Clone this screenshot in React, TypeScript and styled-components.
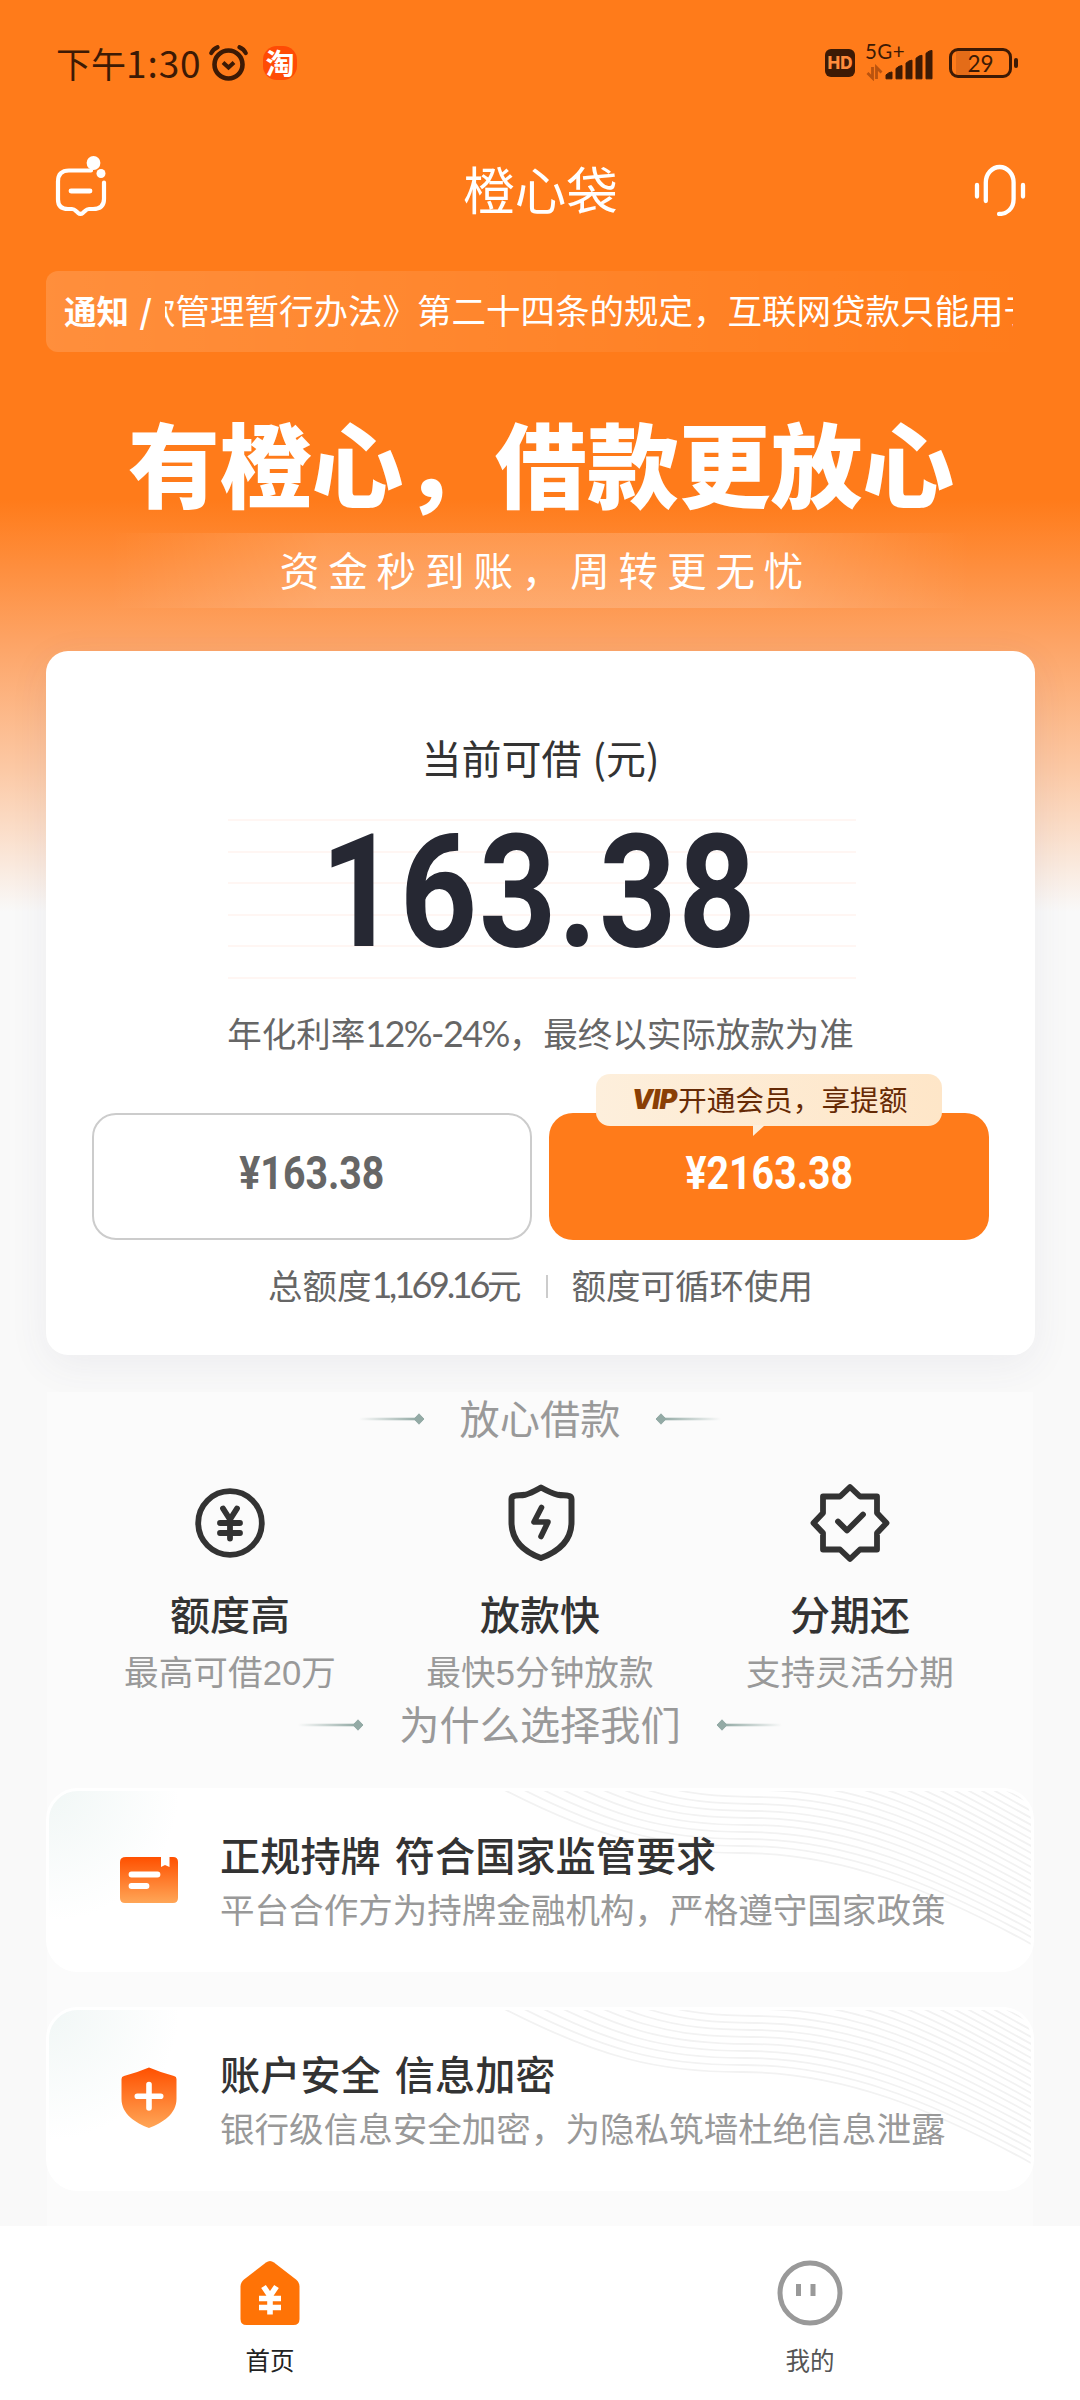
import React from 'react';
import styled, { createGlobalStyle } from 'styled-components';

const cjk = `"Noto Sans CJK SC", sans-serif`;
const brand = '#ff7b1a';
const ink = '#3d1a05';

const GlobalStyle = createGlobalStyle`
  * { box-sizing: border-box; }
  body { margin: 0; background: #f9f9f9; font-family: ${cjk}; }
  svg { display: block; flex: none; }
`;

const Page = styled.div`
  width: 1080px;
  height: 2400px;
  overflow: hidden;
  display: flex;
  flex-direction: column;
  background: linear-gradient(180deg, ${brand} 0, ${brand} 500px, #fda364 640px, #fcc9a5 770px, #f9f9f9 912px);
`;

const StatusBar = styled.header`
  height: 126px;
  padding: 0 62px 0 56px;
  display: flex;
  align-items: center;
  justify-content: space-between;
  color: ${ink};
`;
const StatusSide = styled.div`
  display: flex;
  align-items: center;
`;
const Clock = styled.span`
  width: 153px;
  padding-bottom: 2px;
  font-size: 35px;
  line-height: 50px;
  white-space: nowrap;
`;
const ClockDigits = styled.span`
  font-size: 37px;
  letter-spacing: 0.9px;
`;
const AppBadge = styled.span`
  width: 34px;
  height: 34px;
  margin-left: 15px;
  border-radius: 14px;
  background: #ff4b05;
  color: #fff;
  font-size: 29px;
  font-weight: 700;
  line-height: 32px;
  text-align: center;
`;
const HdBadge = styled.span`
  width: 30px;
  height: 28px;
  border-radius: 6px;
  background: ${ink};
  color: #ff8c3c;
  font: 800 17px/29px Inter, sans-serif;
  text-align: center;
`;
const Network = styled.div`
  width: 72px;
  height: 36px;
  margin: 0 12px 0 10px;
  position: relative;
`;
const NetworkLabel = styled.span`
  position: absolute;
  left: 0;
  top: -2px;
  font: 400 20.5px/17px Lato, sans-serif;
  letter-spacing: 0.4px;
`;
const BatteryBody = styled.div`
  width: 63px;
  height: 30px;
  border: 3px solid ${ink};
  border-radius: 9px;
  background: linear-gradient(90deg, #e46c18 0 14px, transparent 14px) 4px 0 / 100% 100% no-repeat;
  font: 400 22.5px/25px Lato, sans-serif;
  text-align: center;
`;
const BatteryCap = styled.div`
  width: 4px;
  height: 10px;
  margin-left: 2px;
  border-radius: 2px;
  background: ${ink};
`;

const NavBar = styled.nav`
  height: 124px;
  padding: 0 54px 0 55px;
  display: grid;
  grid-template-columns: 54px 1fr 54px;
  align-items: center;
`;
const NavTitle = styled.h1`
  margin: 0;
  padding-bottom: 1px;
  text-align: center;
  color: #fff;
  font-size: 51.5px;
  font-weight: 400;
  line-height: 60px;
`;

const Notice = styled.div`
  height: 81px;
  margin: 21px 46px 0;
  padding: 0 21px 0 18px;
  display: flex;
  align-items: center;
  border-radius: 12px;
  background: linear-gradient(90deg, rgba(255, 255, 255, 0.15), rgba(255, 255, 255, 0));
  color: #fff;
`;
const NoticeTag = styled.span`
  width: 101px;
  flex: none;
  padding-bottom: 3px;
  font-size: 32.5px;
  font-weight: 700;
  line-height: 48px;
  white-space: pre;
  word-spacing: 3px;
`;
const Marquee = styled.div`
  flex: 1;
  overflow: hidden;
  display: flex;
  padding-bottom: 5px;
`;
const MarqueeText = styled.span`
  margin-left: -24px;
  flex: none;
  font-size: 34.5px;
  line-height: 50px;
  white-space: nowrap;
`;

const Hero = styled.section`
  height: 299px;
  display: flex;
  flex-direction: column;
  align-items: center;
  color: #fff;
`;
const Headline = styled.h2`
  margin: 52px 0 0 2px;
  height: 129px;
  font-size: 91.8px;
  font-weight: 900;
  line-height: 115px;
  white-space: nowrap;
`;
const Tagline = styled.p`
  margin: 0;
  width: 860px;
  height: 75px;
  padding-left: 12px;
  text-align: center;
  font-size: 39.5px;
  line-height: 72px;
  letter-spacing: 8.9px;
  background: linear-gradient(90deg, rgba(255, 255, 255, 0), rgba(255, 255, 255, 0.16) 25%, rgba(255, 255, 255, 0.16) 75%, rgba(255, 255, 255, 0));
`;

const LoanCard = styled.section`
  height: 704px;
  margin: 0 45px 0 46px;
  padding: 77px 46px 0;
  flex: none;
  display: flex;
  flex-direction: column;
  align-items: center;
  border-radius: 22px;
  background: #fff;
  box-shadow: 0 10px 40px rgba(70, 75, 110, 0.07);
`;
const LoanLabel = styled.p`
  margin: 0;
  color: #333;
  font-size: 40px;
  line-height: 58px;
  word-spacing: 2px;
`;
const AmountPanel = styled.div`
  width: 628px;
  height: 160px;
  margin: 33px 0 0 2px;
  display: flex;
  justify-content: center;
  background: repeating-linear-gradient(180deg, #fff6f3 0 2px, transparent 2px 31.6px);
`;
const Amount = styled.strong`
  color: #262833;
  font: 700 157px/190px Roboto, sans-serif;
  height: 160px;
  letter-spacing: 2px;
  transform: scaleX(0.86);
  margin: -22px 5px 0 0;
`;
const RateNote = styled.p`
  margin: 28px 0 0;
  color: #666;
  font-size: 34.5px;
  line-height: 50px;
  white-space: nowrap;
`;
const Figures = styled.span<{ $tracking?: number }>`
  font-family: Lato, sans-serif;
  font-size: 36px;
  letter-spacing: ${(p) => p.$tracking ?? 0}px;
`;
const Offers = styled.div`
  align-self: stretch;
  margin-top: 55px;
  display: grid;
  grid-template-columns: 440px 440px;
  justify-content: space-between;
`;
const Offer = styled.button<{ $primary?: boolean }>`
  position: relative;
  height: 127px;
  padding: 0 0 8px;
  display: flex;
  align-items: center;
  justify-content: center;
  border: ${(p) => (p.$primary ? '0' : '2px solid #ccc')};
  border-radius: 24px;
  background: ${(p) => (p.$primary ? brand : '#fff')};
  color: ${(p) => (p.$primary ? '#fff' : '#666')};
`;
const OfferAmount = styled.span`
  font: 700 47px/60px Roboto, sans-serif;
  transform: scaleX(0.835);
`;
const VipTip = styled.span`
  position: absolute;
  left: 47px;
  top: -39px;
  width: 346px;
  height: 52px;
  padding: 0 0 3px 35px;
  display: flex;
  align-items: center;
  border-radius: 14px;
  background: linear-gradient(90deg, #fdefdc, #fee6c8);
  color: #662a05;
  font-family: ${cjk};
  font-size: 28.7px;
  line-height: 40px;
  white-space: nowrap;

  &::after {
    content: '';
    position: absolute;
    left: 157px;
    top: 51px;
    width: 12px;
    height: 11px;
    background: #fdeedb;
    clip-path: polygon(0 0, 100% 0, 0 100%);
  }
`;
const VipMark = styled.em`
  width: 48px;
  margin-left: -1px;
  padding-top: 2px;
  color: #8a3f05;
  font: italic 900 27px/40px Inter, sans-serif;
  letter-spacing: -0.8px;
`;
const Totals = styled.p`
  margin: 19px 0 0;
  display: flex;
  align-items: center;
  color: #666;
  font-size: 34.5px;
  line-height: 50px;
  white-space: nowrap;
`;
const Divider = styled.i`
  width: 2px;
  height: 23px;
  margin: 4px 24px 0 24px;
  background: #ccc;
`;

const Features = styled.section`
  flex: none;
  height: 834px;
  margin: 37px 47px 0;
  background: #fbfbfb;
  display: flex;
  flex-direction: column;
  position: relative;
`;
const SectionTitle = styled.h3`
  margin: 0;
  height: 54px;
  display: flex;
  align-items: center;
  justify-content: center;
  gap: 35px;
  color: #999;
  font-size: 40.2px;
  font-weight: 400;
  line-height: 54px;
`;
const SectionName = styled.span`
  padding-bottom: 5px;
`;
const FeatureRow = styled.div`
  height: 252px;
  padding: 32px 28px 0;
  display: grid;
  grid-template-columns: repeat(3, 310px);
  justify-content: center;
`;
const Feature = styled.div`
  display: flex;
  flex-direction: column;
  align-items: center;
`;
const FeatureName = styled.strong`
  margin-top: 16px;
  color: #333;
  font-size: 40px;
  font-weight: 500;
  line-height: 58px;
`;
const FeatureNote = styled.span`
  margin-top: 5px;
  color: #999;
  font-family: "Liberation Sans", ${cjk};
  font-size: 34.6px;
  line-height: 52px;
  letter-spacing: 0.1px;
  white-space: nowrap;
`;
const Reasons = styled.div`
  margin: 36px -1px 0;
  display: grid;
  gap: 35px;
`;
const Reason = styled.article`
  height: 184px;
  padding: 0 0 0 71px;
  display: flex;
  align-items: center;
  position: relative;
  overflow: hidden;
  border: 3px solid #fff;
  border-radius: 32px;
  background: radial-gradient(circle at 0 0, #f1f7f6, #fff 130px);
`;
const ReasonIcon = styled.div`
  width: 103px;
  flex: none;
`;
const ReasonText = styled.div`
  display: flex;
  flex-direction: column;
  position: relative;
  margin: 2px 0 0 -3px;
`;
const ReasonName = styled.strong`
  color: #333;
  font-size: 40.2px;
  font-weight: 500;
  line-height: 54px;
  word-spacing: 5px;
`;
const ReasonNote = styled.span`
  color: #999;
  font-size: 34.55px;
  line-height: 54px;
  white-space: nowrap;
`;
const WaveArt = styled.svg`
  position: absolute;
  right: 0;
  top: 0;
`;

const TabBar = styled.footer`
  flex: none;
  height: 174px;
  display: grid;
  grid-template-columns: 1fr 1fr;
  background: #fff;
`;
const Tab = styled.div<{ $active?: boolean }>`
  padding-top: 33px;
  display: flex;
  flex-direction: column;
  align-items: center;
  color: ${(p) => (p.$active ? '#222' : '#555')};
  font-size: 24.5px;
  line-height: 36px;
`;
const TabLabel = styled.span`
  margin-top: 15px;
`;

const AlarmIcon = () => (
  <svg width="39" height="36" viewBox="0 0 39 36" fill="none" stroke={ink} strokeLinecap="round">
    <circle cx="19.500" cy="19.500" r="14" strokeWidth="4.600" />
    <path d="M14 17.500l5.500 5 5.500-5" strokeWidth="4" strokeLinecap="butt" />
    <path d="M2.300 8Q4 4 8.500 2.200M36.700 8Q35 4 30.500 2.200" strokeWidth="4.200" />
  </svg>
);

const SignalIcon = () => (
  <svg width="72" height="36" viewBox="0 0 72 36" fill={ink}>
    <path d="M22 34v-4q3-3 6-3v7zM32 34V23.500q3-3 6-3V34zM42 34V18q3-3 6-3V34zM52 34V13q3-3 6-3V34zM62 34V8q3-3 6-3V34z" strokeWidth="1" stroke={ink} strokeLinejoin="round" transform="translate(-1 .5) scale(1 .98)" />
    <path d="M7.500 22v11l-5-5M11.500 34V22.500l5 5" fill="none" stroke="#b9530f" strokeWidth="2.800" />
  </svg>
);

const MessageIcon = () => (
  <svg width="54" height="66" viewBox="0 0 54 66" fill="none" stroke="#fff" strokeLinecap="round" strokeLinejoin="round">
    <path d="M36 15.500H14Q3 15.500 3 26.500v18Q3 54 13 54h4q2 0 4 2l2 1.800q2.500 2 5 0L30 56q2-2 4-2h4q11 0 11-10V27.500" strokeWidth="4.200" />
    <path d="M16 36h19" strokeWidth="4.800" />
    <circle cx="38.500" cy="8" r="6.900" fill="#fff" stroke="none" />
    <circle cx="46" cy="18.500" r="4.500" fill="#fff" stroke="none" />
  </svg>
);

const HeadsetIcon = () => (
  <svg width="54" height="56" viewBox="0 0 54 56" fill="none" stroke="#fff" strokeWidth="4.300" strokeLinecap="round">
    <path d="M13.800 41V22.500a13.900 15.500 0 0 1 27.800 0v16.500c0 10-7 15-14.500 15" />
    <path d="M5 25v11.500M51 25v11.500" />
  </svg>
);

const Flourish = ({ flip = false, id }: { flip?: boolean; id: string }) => (
  <svg width="68" height="12" viewBox="0 0 68 12">
    <defs>
      <linearGradient id={id}>
        <stop offset="0" stopColor="#93aaa5" stopOpacity="0" />
        <stop offset="1" stopColor="#93aaa5" />
      </linearGradient>
    </defs>
    <g transform={flip ? 'translate(68 0) scale(-1 1)' : undefined}>
      <rect x="2" y="4.700" width="58" height="2.600" fill={`url(#${id})`} />
      <path d="M62 .8l5 5.200-5 5.200L57 6z" fill="#93aaa5" stroke="#93aaa5" strokeLinejoin="round" />
    </g>
  </svg>
);

const YuanIcon = () => (
  <svg width="90" height="90" viewBox="0 0 90 90" fill="none" stroke="#333" strokeLinecap="round" strokeLinejoin="round">
    <circle cx="45" cy="45" r="31.800" strokeWidth="5.800" />
    <path d="M38 30.500L45 41.500l7-11M45 42v18.500M35 45h20M35 55h20" strokeWidth="5.800" />
  </svg>
);

const ShieldIcon = () => (
  <svg width="90" height="90" viewBox="0 0 90 90" fill="none" stroke="#333" strokeWidth="6" strokeLinecap="round" strokeLinejoin="round">
    <path d="M46 9.500c-5 2.800-10 5.800-16 7.300-4 .9-7 .2-10 .9q-3.500.6-3.500 3.300V44c0 19 13 30 29.500 36 16.500-6 30.500-17 30.500-36V21q0-2.700-3.500-3.300c-3-.7-6 0-10-.9-6-1.500-12-4.500-17-7.300z" />
    <path d="M46.500 29.500L39 44h14L46 58.500" strokeWidth="5.600" />
  </svg>
);

const SealIcon = () => (
  <svg width="90" height="90" viewBox="0 0 90 90" fill="none" stroke="#333" strokeWidth="5.800" strokeLinecap="round" strokeLinejoin="round">
    <path d="M45 9l10 9.500h17V35l9.500 10-9.500 10v16.500H55L45 81l-10-9.500H18V55L8.500 45 18 35V18.500h17z" />
    <path d="M33 43.500l9 9L58 36.500" />
  </svg>
);

const LicenseIcon = () => (
  <svg width="58" height="60" viewBox="0 0 58 60">
    <defs>
      <linearGradient id="license" x2="0" y2="1">
        <stop offset="0" stopColor="#ff5000" />
        <stop offset="1" stopColor="#ffa657" />
      </linearGradient>
    </defs>
    <path d="M6 7h35v10l4-2 4.500 2V7H53q5 0 5 5v36q0 5-5 5H5q-5 0-5-5V12q0-5 6-5z" fill="url(#license)" />
    <path d="M11.500 24.500h26M11.500 36h15" stroke="#fff" strokeWidth="5.800" strokeLinecap="round" />
  </svg>
);

const SecurityIcon = () => (
  <svg width="58" height="64" viewBox="0 0 58 64">
    <defs>
      <linearGradient id="security" x2="0" y2="1">
        <stop offset="0" stopColor="#ff5000" />
        <stop offset="1" stopColor="#ffa657" />
      </linearGradient>
    </defs>
    <path d="M29 .5q13 5.500 25 8.500 2.500.7 2.500 3v20c0 15-14 24-27.500 29C15.500 56 1.500 47 1.500 32V12q0-2.300 2.500-3Q16 6 29 .5z" fill="url(#security)" />
    <path d="M29 17.500v23.500M17.300 29.300h23.400" stroke="#fff" strokeWidth="5.600" strokeLinecap="round" />
  </svg>
);

const waveOffsets = Array.from({ length: 22 }, (_, i) => i);

const Waves = () => (
  <WaveArt width="560" height="178" viewBox="0 0 560 178" fill="none" stroke="#f2f2f2" strokeWidth="1.800">
    {waveOffsets.map((i) => (
      <path
        key={i}
        d={`M${20 + i * 6} ${-8 - i * 7}C${130 + i * 4} ${50 - i * 7} ${190 + i * 2} ${62 - i * 7} ${270 + i * 2} ${62 - i * 7}C${370 + i * 2} ${62 - i * 7} ${460} ${98 - i * 7} 562 ${154 - i * 7}`}
      />
    ))}
  </WaveArt>
);

const HomeIcon = () => (
  <svg width="66" height="68" viewBox="0 0 66 68">
    <path d="M29 3.500q4-3 8 0l22 17q3.500 3 3.500 7V60q0 6-6 6h-47q-6 0-6-6V27.500q0-4 3.500-7z" fill="#ff7306" />
    <path d="M26.500 27.500L33 37l6.500-9.500M33 37v18.500M22 39.500h22M22 48.500h22" stroke="#fff" strokeWidth="5.600" fill="none" />
  </svg>
);

const MineIcon = () => (
  <svg width="66" height="68" viewBox="0 0 66 68" fill="none" stroke="#999" strokeWidth="5">
    <circle cx="33" cy="34" r="30" />
    <path d="M21.500 25v12M36 25v12" />
  </svg>
);

const features = [
  { icon: <YuanIcon />, name: '额度高', note: '最高可借20万' },
  { icon: <ShieldIcon />, name: '放款快', note: '最快5分钟放款' },
  { icon: <SealIcon />, name: '分期还', note: '支持灵活分期' },
];

const reasons = [
  { icon: <LicenseIcon />, name: '正规持牌 符合国家监管要求', note: '平台合作方为持牌金融机构，严格遵守国家政策' },
  { icon: <SecurityIcon />, name: '账户安全 信息加密', note: '银行级信息安全加密，为隐私筑墙杜绝信息泄露' },
];

export default function App() {
  return (
    <Page lang="zh-CN">
      <GlobalStyle />
      <StatusBar>
        <StatusSide>
          <Clock>下午<ClockDigits>1:30</ClockDigits></Clock>
          <AlarmIcon />
          <AppBadge>淘</AppBadge>
        </StatusSide>
        <StatusSide>
          <HdBadge>HD</HdBadge>
          <Network>
            <NetworkLabel>5G+</NetworkLabel>
            <SignalIcon />
          </Network>
          <BatteryBody>29</BatteryBody>
          <BatteryCap />
        </StatusSide>
      </StatusBar>
      <NavBar>
        <MessageIcon />
        <NavTitle>橙心袋</NavTitle>
        <HeadsetIcon />
      </NavBar>
      <Notice>
        <NoticeTag>通知 /</NoticeTag>
        <Marquee>
          <MarqueeText>款管理暂行办法》第二十四条的规定，互联网贷款只能用于</MarqueeText>
        </Marquee>
      </Notice>
      <Hero>
        <Headline>有橙心，借款更放心</Headline>
        <Tagline>资金秒到账，周转更无忧</Tagline>
      </Hero>
      <LoanCard>
        <LoanLabel>当前可借 (元)</LoanLabel>
        <AmountPanel>
          <Amount>163.38</Amount>
        </AmountPanel>
        <RateNote>
          年化利率<Figures $tracking={-1.6}>12%-24%</Figures>，最终以实际放款为准
        </RateNote>
        <Offers>
          <Offer>
            <OfferAmount>¥163.38</OfferAmount>
          </Offer>
          <Offer $primary>
            <OfferAmount>¥2163.38</OfferAmount>
            <VipTip>
              <VipMark>VIP</VipMark>开通会员，享提额
            </VipTip>
          </Offer>
        </Offers>
        <Totals>
          总额度<Figures $tracking={-3.3}>1,169.16</Figures>元
          <Divider />
          额度可循环使用
        </Totals>
      </LoanCard>
      <Features>
        <SectionTitle>
          <Flourish id="loanLeft" />
          <SectionName>放心借款</SectionName>
          <Flourish id="loanRight" flip />
        </SectionTitle>
        <FeatureRow>
          {features.map((f) => (
            <Feature key={f.name}>
              {f.icon}
              <FeatureName>{f.name}</FeatureName>
              <FeatureNote>{f.note}</FeatureNote>
            </Feature>
          ))}
        </FeatureRow>
        <SectionTitle>
          <Flourish id="whyLeft" />
          <SectionName>为什么选择我们</SectionName>
          <Flourish id="whyRight" flip />
        </SectionTitle>
        <Reasons>
          {reasons.map((r) => (
            <Reason key={r.name}>
              <Waves />
              <ReasonIcon>{r.icon}</ReasonIcon>
              <ReasonText>
                <ReasonName>{r.name}</ReasonName>
                <ReasonNote>{r.note}</ReasonNote>
              </ReasonText>
            </Reason>
          ))}
        </Reasons>
      </Features>
      <TabBar>
        <Tab $active>
          <HomeIcon />
          <TabLabel>首页</TabLabel>
        </Tab>
        <Tab>
          <MineIcon />
          <TabLabel>我的</TabLabel>
        </Tab>
      </TabBar>
    </Page>
  );
}
